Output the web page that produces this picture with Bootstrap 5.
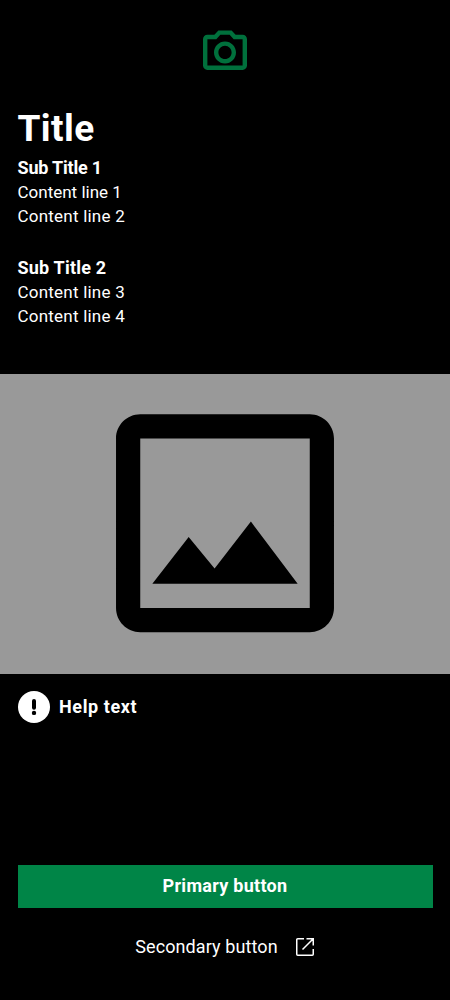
<!DOCTYPE html>
<html lang="en">
<head>
<meta charset="utf-8">
<meta name="viewport" content="width=device-width, initial-scale=1">
<title>Title</title>
<link href="https://cdn.jsdelivr.net/npm/bootstrap@5.3.0/dist/css/bootstrap.min.css" rel="stylesheet">
<style>
body{background:#000;color:#fff;font-family:Roboto,"Liberation Sans",sans-serif;font-size:17px;line-height:24px}
.screen{height:1000px;overflow:hidden}
.camera{height:100px;padding-top:23px}
.copy{height:273.5px;padding:9px 17.5px 0}
h1{font-size:37px;line-height:40px;font-weight:700;margin:0 0 6px;letter-spacing:.4px}
h2{font-size:18px;line-height:25px;font-weight:700;margin:0}
.first-heading{letter-spacing:-.2px}
.second-heading{letter-spacing:.2px;padding-top:27px}
.wider{letter-spacing:.22px}
.picture{height:300px;background:#999}
.help{padding:17.7px 17.5px 0;gap:9.5px}
.help strong{font-size:18px;letter-spacing:.6px;margin-top:-1px}
.actions{padding:0 17.5px 31.5px}
.btn{--bs-btn-font-size:18px;--bs-btn-line-height:24px;--bs-btn-border-radius:0;--bs-btn-border-width:0;--bs-btn-color:#fff;--bs-btn-hover-color:#fff}
.btn-main{--bs-btn-bg:#008547;--bs-btn-hover-bg:#00703c;--bs-btn-font-weight:700;height:43.5px;padding:0 0 .5px;letter-spacing:.28px}
.btn-second{height:44px;margin-top:16.5px;padding:0;letter-spacing:.1px;gap:17px}
</style>
</head>
<body>
<main class="screen d-flex flex-column">
  <header class="camera">
    <svg class="d-block mx-auto" width="54" height="54" viewBox="-.27 -.36 24.54 24.54" fill="#00703c"><path d="M20 5h-3.170L15 3H9L7.170 5H4c-1.100 0-2 .9-2 2v12c0 1.100.9 2 2 2h16c1.100 0 2-.9 2-2V7c0-1.100-.9-2-2-2zm0 14H4V7h4.050l1.830-2h4.240l1.830 2H20v12zM12 8c-2.760 0-5 2.240-5 5s2.240 5 5 5 5-2.240 5-5-2.240-5-5-5zm0 8c-1.650 0-3-1.350-3-3s1.350-3 3-3 3 1.350 3 3-1.350 3-3 3z"/></svg>
  </header>
  <section class="copy">
    <h1>Title</h1>
    <h2 class="first-heading">Sub Title 1</h2>
    <div>Content line 1</div>
    <div class="wider">Content line 2</div>
    <h2 class="second-heading">Sub Title 2</h2>
    <div class="wider">Content line 3</div>
    <div class="wider">Content line 4</div>
  </section>
  <div class="picture d-flex align-items-center justify-content-center flex-shrink-0">
    <svg width="292" height="292" viewBox="-.058 0 24.116 24.116"><path d="M19 5v14H5V5h14m0-2H5c-1.100 0-2 .9-2 2v14c0 1.100.9 2 2 2h14c1.100 0 2-.9 2-2V5c0-1.100-.9-2-2-2zm-4.860 8.860-3 3.870L9 13.140 6 17h12l-3.860-5.140z"/></svg>
  </div>
  <div class="help d-flex align-items-center">
    <svg width="32" height="32" viewBox="0 0 32 32"><circle cx="16" cy="16" r="16" fill="#fff"/><path d="M16 10v6.800" stroke="#000" stroke-width="4" stroke-linecap="round"/><circle cx="16" cy="21.900" r="2.200"/></svg>
    <strong>Help text</strong>
  </div>
  <div class="actions mt-auto d-grid">
    <button class="btn btn-main">Primary button</button>
    <button class="btn btn-second d-flex align-items-center justify-content-center"><span>Secondary button</span>
      <svg width="20" height="20" viewBox="0 0 20 20" fill="none" stroke="#fff" stroke-width="1.500"><path d="M9 1.750H2.750a1 1 0 0 0-1 1v14.500a1 1 0 0 0 1 1h14.500a1 1 0 0 0 1-1V12M11.500 1.750h6.750V8.500M18 2 7.500 12.500"/></svg>
    </button>
  </div>
</main>
<script src="https://cdn.jsdelivr.net/npm/bootstrap@5.3.0/dist/js/bootstrap.bundle.min.js"></script>
</body>
</html>
